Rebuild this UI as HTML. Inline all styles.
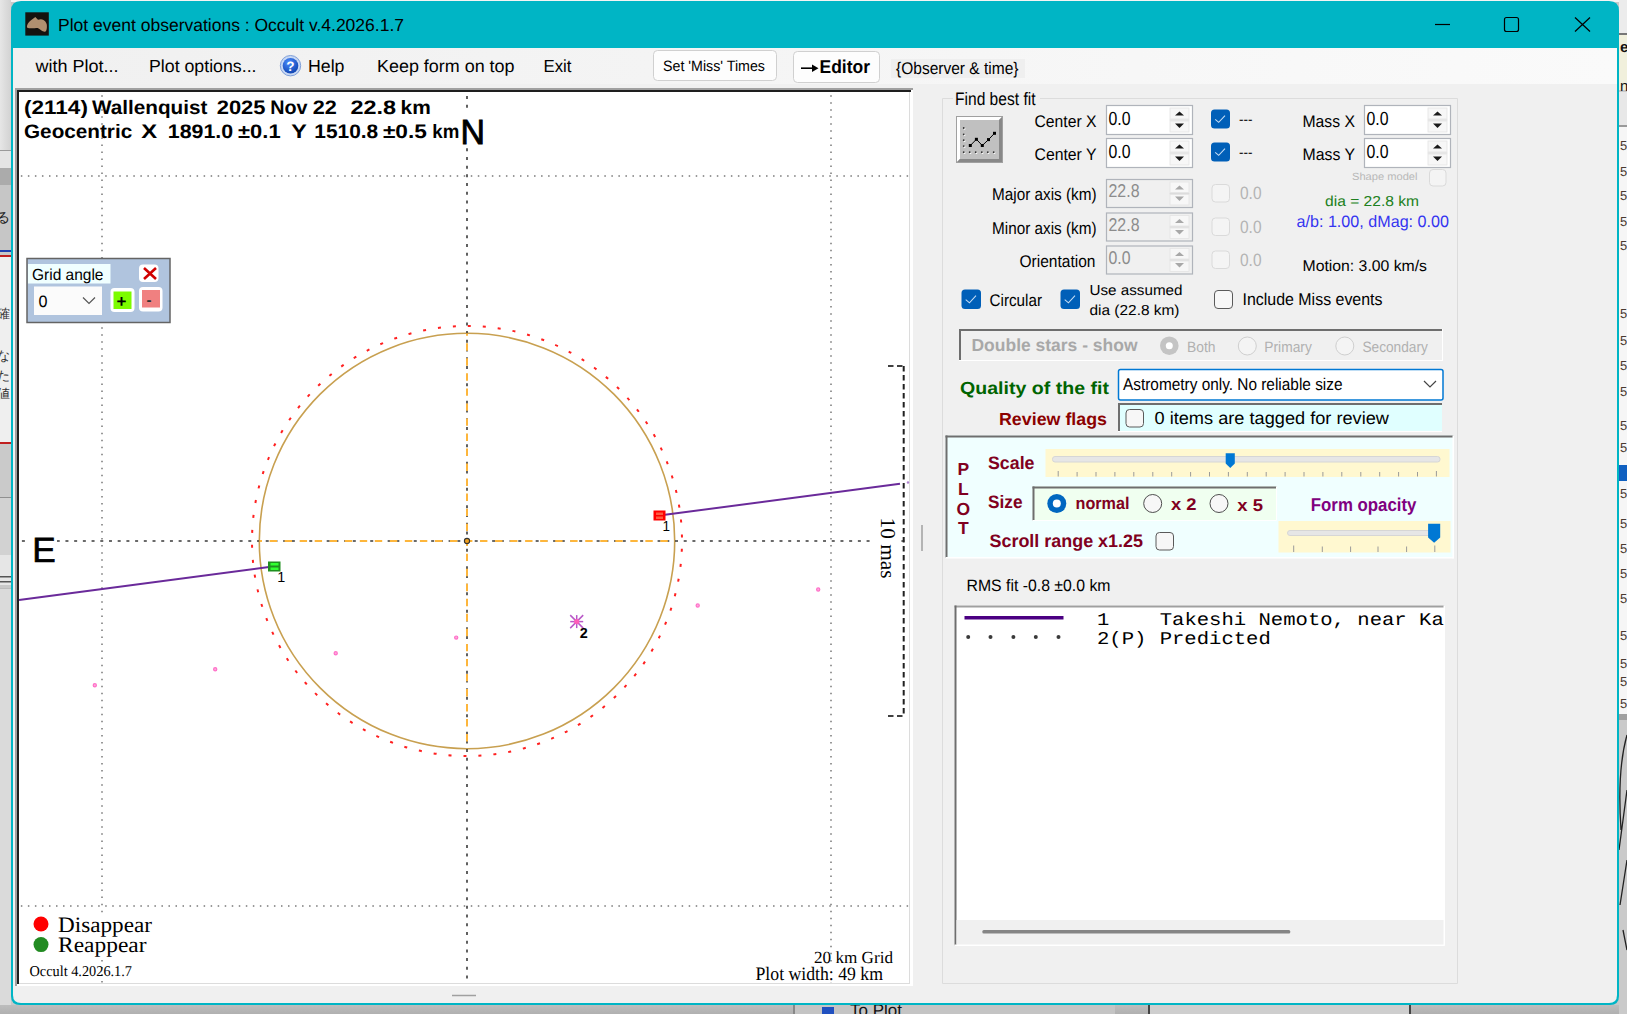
<!DOCTYPE html>
<html><head><meta charset="utf-8"><title>Plot event observations</title>
<style>html,body{margin:0;padding:0;background:#c8c8c8;overflow:hidden} svg{display:block}</style></head>
<body><svg width="1627" height="1014" viewBox="0 0 1627 1014" shape-rendering="auto" text-rendering="geometricPrecision">
<rect x="0" y="0" width="1627" height="1014" fill="#c8c8c8" />
<rect x="0" y="0" width="1627" height="2" fill="#f4f4f4" />
<defs><linearGradient id="lg" x1="0" x2="1"><stop offset="0" stop-color="#e6e6e6"/><stop offset="1" stop-color="#d2d2d2"/></linearGradient><linearGradient id="menug" x1="0" x2="1"><stop offset="0" stop-color="#f0f0f0"/><stop offset="1" stop-color="#fafafa"/></linearGradient><linearGradient id="bg2" x1="0" x2="0" y1="0" y2="1"><stop offset="0" stop-color="#bdbdbd"/><stop offset="1" stop-color="#b0b0b0"/></linearGradient></defs>
<rect x="0" y="0" width="11" height="150" fill="url(#lg)" />
<rect x="0" y="150" width="11" height="1" fill="#9a9a9a" />
<rect x="0" y="151" width="11" height="17" fill="#e4e4e4" />
<rect x="0" y="168" width="11" height="17" fill="#ababab" />
<rect x="0" y="185" width="11" height="65" fill="#c6c6c6" />
<text x="-4.0" y="222.0" font-size="14" font-family='"Liberation Sans", sans-serif' fill="#222" >る</text>
<rect x="0" y="250" width="11" height="2" fill="#2040b0" />
<rect x="0" y="255" width="11" height="2" fill="#c02020" />
<rect x="0" y="257" width="11" height="186" fill="#efefef" />
<text x="-3.0" y="318.0" font-size="13" font-family='"Liberation Sans", sans-serif' fill="#333" >確</text>
<text x="-3.0" y="360.0" font-size="13" font-family='"Liberation Sans", sans-serif' fill="#333" >な</text>
<text x="-3.0" y="380.0" font-size="13" font-family='"Liberation Sans", sans-serif' fill="#333" >た</text>
<text x="-3.0" y="398.0" font-size="13" font-family='"Liberation Sans", sans-serif' fill="#333" >値</text>
<rect x="0" y="442" width="11" height="2" fill="#c02020" />
<rect x="0" y="444" width="11" height="53" fill="#cacaca" />
<rect x="0" y="497" width="11" height="1" fill="#909090" />
<rect x="0" y="498" width="11" height="57" fill="#d2d2d2" />
<rect x="0" y="555" width="11" height="30" fill="#e6e6e6" />
<rect x="0" y="576" width="11" height="1.5" fill="#555" />
<rect x="0" y="581" width="11" height="1.5" fill="#555" />
<rect x="0" y="588" width="11" height="1" fill="#bbb" />
<rect x="0" y="589" width="11" height="416" fill="#dadada" />
<rect x="0" y="1005" width="1627" height="9" fill="url(#bg2)" />
<rect x="793" y="1005" width="2" height="9" fill="#888" />
<rect x="795" y="1005" width="320" height="9" fill="#c4c4c4" />
<text x="850.0" y="1016.0" font-size="17" font-family='"Liberation Sans", sans-serif' fill="#111" >To Plot</text>
<rect x="822" y="1007" width="12" height="7" fill="#2050c0" />
<rect x="1148" y="1005" width="2" height="9" fill="#444" />
<rect x="1372" y="1008" width="3" height="3" fill="#222" />
<rect x="1409" y="1005" width="2" height="9" fill="#444" />
<rect x="1150" y="1005" width="259" height="9" fill="#cecece" />
<rect x="1619" y="0" width="8" height="34" fill="#ececec" />
<rect x="1619" y="33" width="8" height="2" fill="#777" />
<rect x="1619" y="35" width="8" height="55" fill="#f1f0dc" />
<text x="1620.0" y="52.0" font-size="15" font-family='"Liberation Sans", sans-serif' fill="#111" font-weight="bold" >e</text>
<text x="1620.0" y="91.0" font-size="15" font-family='"Liberation Sans", sans-serif' fill="#111" >n</text>
<rect x="1619" y="92" width="8" height="33" fill="#e8e8e8" />
<rect x="1619" y="125" width="8" height="2" fill="#999" />
<rect x="1619" y="127" width="8" height="587" fill="#f6f6f6" />
<text x="1620.0" y="150.0" font-size="13" font-family='"Liberation Sans", sans-serif' fill="#4a3a30" >5</text>
<text x="1620.0" y="176.0" font-size="13" font-family='"Liberation Sans", sans-serif' fill="#4a3a30" >5</text>
<text x="1620.0" y="200.0" font-size="13" font-family='"Liberation Sans", sans-serif' fill="#4a3a30" >5</text>
<text x="1620.0" y="226.0" font-size="13" font-family='"Liberation Sans", sans-serif' fill="#4a3a30" >5</text>
<text x="1620.0" y="250.0" font-size="13" font-family='"Liberation Sans", sans-serif' fill="#4a3a30" >5</text>
<text x="1620.0" y="318.0" font-size="13" font-family='"Liberation Sans", sans-serif' fill="#4a3a30" >5</text>
<text x="1620.0" y="345.0" font-size="13" font-family='"Liberation Sans", sans-serif' fill="#4a3a30" >5</text>
<text x="1620.0" y="370.0" font-size="13" font-family='"Liberation Sans", sans-serif' fill="#4a3a30" >5</text>
<text x="1620.0" y="396.0" font-size="13" font-family='"Liberation Sans", sans-serif' fill="#4a3a30" >5</text>
<text x="1620.0" y="430.0" font-size="13" font-family='"Liberation Sans", sans-serif' fill="#4a3a30" >5</text>
<text x="1620.0" y="452.0" font-size="13" font-family='"Liberation Sans", sans-serif' fill="#4a3a30" >5</text>
<text x="1620.0" y="498.0" font-size="13" font-family='"Liberation Sans", sans-serif' fill="#4a3a30" >5</text>
<text x="1620.0" y="528.0" font-size="13" font-family='"Liberation Sans", sans-serif' fill="#4a3a30" >5</text>
<text x="1620.0" y="553.0" font-size="13" font-family='"Liberation Sans", sans-serif' fill="#4a3a30" >5</text>
<text x="1620.0" y="578.0" font-size="13" font-family='"Liberation Sans", sans-serif' fill="#4a3a30" >5</text>
<text x="1620.0" y="603.0" font-size="13" font-family='"Liberation Sans", sans-serif' fill="#4a3a30" >5</text>
<text x="1620.0" y="640.0" font-size="13" font-family='"Liberation Sans", sans-serif' fill="#4a3a30" >5</text>
<text x="1620.0" y="668.0" font-size="13" font-family='"Liberation Sans", sans-serif' fill="#4a3a30" >5</text>
<text x="1620.0" y="686.0" font-size="13" font-family='"Liberation Sans", sans-serif' fill="#4a3a30" >5</text>
<text x="1620.0" y="708.0" font-size="13" font-family='"Liberation Sans", sans-serif' fill="#4a3a30" >5</text>
<rect x="1619" y="465" width="8" height="16" fill="#1060c0" />
<rect x="1619" y="714" width="8" height="6" fill="#a0a0a0" />
<rect x="1619" y="720" width="8" height="294" fill="#cacaca" />
<path d="M1627,735 Q1617,770 1621,830 M1627,790 L1619,850 M1627,860 L1620,905 M1623,930 L1627,950" fill="none" stroke="#222" stroke-width="1.3"/>
<path d="M21,1 H1609 Q1619,1 1619,11 V996 Q1619,1005 1610,1005 H20 Q11,1005 11,996 V11 Q11,1 21,1 Z" fill="#00b5c5"/>
<path d="M13,48 H1617 V995 Q1617,1003 1609,1003 H21 Q13,1003 13,995 Z" fill="#f0f0f0"/>
<rect x="13" y="48" width="1604" height="36" fill="url(#menug)" />
<rect x="25.3" y="12.3" width="23.5" height="23.3" fill="#14120f" />
<path d="M26.9,26.5 C27.5,22 32,19.5 35.3,17 L38,19.7 C40,19 42,18.8 43.5,20 C46,21.5 47.2,24 46.9,27 C46.8,30 46,32 44.5,31.8 C41,31 39.5,28.5 37.7,28 C35,28 33,28.5 30.9,28.3 C28.5,28.2 26.7,28 26.9,26.5 Z" fill="#b09070"/>
<text x="58.0" y="31.0" font-size="17.5" font-family='"Liberation Sans", sans-serif' fill="#000" textLength="346.0" lengthAdjust="spacingAndGlyphs" >Plot event observations : Occult v.4.2026.1.7</text>
<line x1="1435" y1="24.5" x2="1450" y2="24.5" stroke="#000" stroke-width="1.2" />
<rect x="1504.5" y="17.5" width="14" height="14" fill="none" stroke="#000" stroke-width="1.2" rx="2" />
<line x1="1575" y1="17.5" x2="1590" y2="31.5" stroke="#000" stroke-width="1.2" />
<line x1="1590" y1="17.5" x2="1575" y2="31.5" stroke="#000" stroke-width="1.2" />
<text x="35.5" y="72.0" font-size="17.5" font-family='"Liberation Sans", sans-serif' fill="#000" textLength="83.0" lengthAdjust="spacingAndGlyphs" >with Plot...</text>
<text x="149.0" y="72.0" font-size="17.5" font-family='"Liberation Sans", sans-serif' fill="#000" textLength="107.5" lengthAdjust="spacingAndGlyphs" >Plot options...</text>
<defs><radialGradient id="hg" cx="0.4" cy="0.3" r="0.8"><stop offset="0" stop-color="#4a8cff"/><stop offset="1" stop-color="#0a3ca8"/></radialGradient></defs>
<circle cx="290.5" cy="65.7" r="10.2" fill="#c8d8f4" stroke="#7f9fd8" stroke-width="1"/>
<circle cx="290.5" cy="65.7" r="7.8" fill="url(#hg)"/>
<text x="286.2" y="70.8" font-size="13.5" font-family='"Liberation Sans", sans-serif' fill="#fff" font-weight="bold" >?</text>
<text x="308.0" y="72.0" font-size="17.5" font-family='"Liberation Sans", sans-serif' fill="#000" textLength="36.5" lengthAdjust="spacingAndGlyphs" >Help</text>
<text x="377.0" y="72.0" font-size="17.5" font-family='"Liberation Sans", sans-serif' fill="#000" textLength="137.5" lengthAdjust="spacingAndGlyphs" >Keep form on top</text>
<text x="543.5" y="72.0" font-size="17.5" font-family='"Liberation Sans", sans-serif' fill="#000" textLength="28.0" lengthAdjust="spacingAndGlyphs" >Exit</text>
<rect x="653.5" y="50.5" width="123" height="30" fill="#fdfdfd" stroke="#d0d0d0" stroke-width="1" rx="4" />
<text x="663.0" y="70.5" font-size="15" font-family='"Liberation Sans", sans-serif' fill="#000" textLength="102.0" lengthAdjust="spacingAndGlyphs" >Set 'Miss' Times</text>
<rect x="793.5" y="51.5" width="86" height="31" fill="#fdfdfd" stroke="#d0d0d0" stroke-width="1" rx="4" />
<line x1="801" y1="68.2" x2="815" y2="68.2" stroke="#000" stroke-width="1.6" />
<path d="M812,64.5 L818.5,68.2 L812,71.9 Z" fill="#000"/>
<text x="819.5" y="73.4" font-size="18.5" font-family='"Liberation Sans", sans-serif' fill="#000" font-weight="bold" textLength="50.5" lengthAdjust="spacingAndGlyphs" >Editor</text>
<rect x="891" y="59" width="134" height="19" fill="#efefef" />
<text x="896.0" y="74.0" font-size="17" font-family='"Liberation Sans", sans-serif' fill="#000" textLength="122.5" lengthAdjust="spacingAndGlyphs" >{Observer &amp; time}</text>
<rect x="15" y="88" width="898" height="898" fill="#ffffff" />
<rect x="15" y="88" width="898" height="2" fill="#a0a0a0" />
<rect x="15" y="88" width="2" height="898" fill="#a0a0a0" />
<rect x="17" y="90" width="894" height="2" fill="#1e1e1e" />
<rect x="17" y="90" width="2" height="894" fill="#1e1e1e" />
<rect x="909" y="92" width="1" height="892" fill="#dcdcdc" />
<rect x="19" y="983" width="891" height="1" fill="#dcdcdc" />
<g id="plot">
<line x1="102" y1="93" x2="102" y2="983" stroke="#787878" stroke-width="1.5" stroke-dasharray="1.5 5.53" stroke-dashoffset="-2.2"/>
<line x1="831" y1="93" x2="831" y2="983" stroke="#787878" stroke-width="1.5" stroke-dasharray="1.5 5.53" stroke-dashoffset="-2.2"/>
<line x1="19" y1="176" x2="909" y2="176" stroke="#787878" stroke-width="1.5" stroke-dasharray="1.5 5.53" stroke-dashoffset="-1.85"/>
<line x1="19" y1="906" x2="909" y2="906" stroke="#787878" stroke-width="1.5" stroke-dasharray="1.5 5.53" stroke-dashoffset="-1.85"/>
<circle cx="467" cy="541" r="207.7" fill="none" stroke="#c8a050" stroke-width="1.6"/>
<circle cx="467" cy="541" r="215" fill="none" stroke="#ff2020" stroke-width="2" stroke-dasharray="3 12.010" stroke-dashoffset="-7.9"/>
<line x1="19" y1="541" x2="909" y2="541" stroke="#3a3a3a" stroke-width="1.6" stroke-dasharray="3 5.708" stroke-dashoffset="-2.9"/>
<line x1="467" y1="93" x2="467" y2="983" stroke="#3a3a3a" stroke-width="1.6" stroke-dasharray="3 5.708" stroke-dashoffset="-3"/>
<line x1="259.3" y1="541" x2="674.7" y2="541" stroke="#fdb63c" stroke-width="2" stroke-dasharray="7.4 7.63" stroke-dashoffset="-10.3"/>
<line x1="467" y1="333.3" x2="467" y2="748.7" stroke="#fdb63c" stroke-width="2" stroke-dasharray="7.4 7.63" stroke-dashoffset="-10"/>
<rect x="458" y="111" width="29" height="36" fill="#fff" />
<rect x="26" y="531" width="31" height="34" fill="#fff" />
<rect x="871" y="512" width="29" height="72" fill="#fff" />
<circle cx="467" cy="541" r="2.6" fill="#f0a020" stroke="#333" stroke-width="1.1"/>
<line x1="19" y1="600.1" x2="269" y2="567.1" stroke="#6a2a9a" stroke-width="2" />
<line x1="665" y1="514.8" x2="900" y2="483.7" stroke="#6a2a9a" stroke-width="2" />
<circle cx="908" cy="482.5" r="1.2" fill="#b080d0"/>
<rect x="268" y="561.5" width="12.5" height="10" fill="#1f8f1f" />
<rect x="270.5" y="563" width="8" height="2.5" fill="#30ff30" />
<rect x="270.5" y="567.5" width="8" height="2.5" fill="#30ff30" />
<rect x="653.5" y="510.5" width="12" height="10" fill="#ff0000" />
<rect x="656" y="512.5" width="7" height="2.5" fill="#ff5a40" />
<rect x="656" y="516.5" width="7" height="2.5" fill="#ff5a40" />
<text x="277.3" y="581.5" font-size="14.5" font-family='"Liberation Sans", sans-serif' fill="#000" textLength="8.0" lengthAdjust="spacingAndGlyphs" >1</text>
<text x="662.5" y="531.0" font-size="14.5" font-family='"Liberation Sans", sans-serif' fill="#000" textLength="7.5" lengthAdjust="spacingAndGlyphs" >1</text>
<circle cx="94.8" cy="685.3" r="1.6" fill="#ffa8dc" stroke="#ff70c8" stroke-width="1.2"/>
<circle cx="215.2" cy="669.3" r="1.6" fill="#ffa8dc" stroke="#ff70c8" stroke-width="1.2"/>
<circle cx="335.7" cy="653.3" r="1.6" fill="#ffa8dc" stroke="#ff70c8" stroke-width="1.2"/>
<circle cx="456.2" cy="637.6" r="1.6" fill="#ffa8dc" stroke="#ff70c8" stroke-width="1.2"/>
<circle cx="697.7" cy="605.5" r="1.6" fill="#ffa8dc" stroke="#ff70c8" stroke-width="1.2"/>
<circle cx="818.2" cy="589.5" r="1.6" fill="#ffa8dc" stroke="#ff70c8" stroke-width="1.2"/>
<line x1="570.2" y1="621.6" x2="583.2" y2="621.6" stroke="#b858c8" stroke-width="1.5" />
<line x1="576.7" y1="615.1" x2="576.7" y2="628.1" stroke="#b858c8" stroke-width="1.5" />
<line x1="570.2" y1="615.1" x2="583.2" y2="628.1" stroke="#b858c8" stroke-width="1.5" />
<line x1="570.2" y1="628.1" x2="583.2" y2="615.1" stroke="#b858c8" stroke-width="1.5" />
<circle cx="576.7" cy="621.6" r="2.6" fill="#ff5cb8"/>
<text x="579.8" y="637.7" font-size="14.5" font-family='"Liberation Sans", sans-serif' fill="#000" font-weight="bold" textLength="8.0" lengthAdjust="spacingAndGlyphs" >2</text>
<line x1="903.7" y1="366" x2="903.7" y2="716" stroke="#202020" stroke-width="2" stroke-dasharray="5.5 3.5"/>
<line x1="888" y1="366" x2="903.7" y2="366" stroke="#404040" stroke-width="2" stroke-dasharray="5.5 3.5"/>
<line x1="888" y1="716" x2="903.7" y2="716" stroke="#404040" stroke-width="2" stroke-dasharray="5.5 3.5"/>
<text x="880.5" y="517.5" font-size="21" font-family='"Liberation Serif", serif' fill="#000" textLength="61.0" lengthAdjust="spacingAndGlyphs" transform="rotate(90 880.5 517.5)">10 mas</text>
<text x="24.0" y="114.0" font-size="19.5" font-family='"Liberation Sans", sans-serif' fill="#000" font-weight="bold" textLength="63.9" lengthAdjust="spacingAndGlyphs" >(2114)</text>
<text x="91.9" y="114.0" font-size="19.5" font-family='"Liberation Sans", sans-serif' fill="#000" font-weight="bold" textLength="115.5" lengthAdjust="spacingAndGlyphs" >Wallenquist</text>
<text x="216.7" y="114.0" font-size="19.5" font-family='"Liberation Sans", sans-serif' fill="#000" font-weight="bold" textLength="48.8" lengthAdjust="spacingAndGlyphs" >2025</text>
<text x="270.2" y="114.0" font-size="19.5" font-family='"Liberation Sans", sans-serif' fill="#000" font-weight="bold" textLength="37.3" lengthAdjust="spacingAndGlyphs" >Nov</text>
<text x="312.8" y="114.0" font-size="19.5" font-family='"Liberation Sans", sans-serif' fill="#000" font-weight="bold" textLength="24.1" lengthAdjust="spacingAndGlyphs" >22</text>
<text x="350.4" y="114.0" font-size="19.5" font-family='"Liberation Sans", sans-serif' fill="#000" font-weight="bold" textLength="45.5" lengthAdjust="spacingAndGlyphs" >22.8</text>
<text x="400.6" y="114.0" font-size="19.5" font-family='"Liberation Sans", sans-serif' fill="#000" font-weight="bold" textLength="30.2" lengthAdjust="spacingAndGlyphs" >km</text>
<text x="24.0" y="138.3" font-size="19.5" font-family='"Liberation Sans", sans-serif' fill="#000" font-weight="bold" textLength="108.2" lengthAdjust="spacingAndGlyphs" >Geocentric</text>
<text x="141.3" y="138.3" font-size="19.5" font-family='"Liberation Sans", sans-serif' fill="#000" font-weight="bold" textLength="15.9" lengthAdjust="spacingAndGlyphs" >X</text>
<text x="167.8" y="138.3" font-size="19.5" font-family='"Liberation Sans", sans-serif' fill="#000" font-weight="bold" textLength="65.4" lengthAdjust="spacingAndGlyphs" >1891.0</text>
<text x="238.1" y="138.3" font-size="19.5" font-family='"Liberation Sans", sans-serif' fill="#000" font-weight="bold" textLength="42.5" lengthAdjust="spacingAndGlyphs" >±0.1</text>
<text x="291.2" y="138.3" font-size="19.5" font-family='"Liberation Sans", sans-serif' fill="#000" font-weight="bold" textLength="15.6" lengthAdjust="spacingAndGlyphs" >Y</text>
<text x="314.3" y="138.3" font-size="19.5" font-family='"Liberation Sans", sans-serif' fill="#000" font-weight="bold" textLength="63.9" lengthAdjust="spacingAndGlyphs" >1510.8</text>
<text x="382.9" y="138.3" font-size="19.5" font-family='"Liberation Sans", sans-serif' fill="#000" font-weight="bold" textLength="44.0" lengthAdjust="spacingAndGlyphs" >±0.5</text>
<text x="432.3" y="138.3" font-size="19.5" font-family='"Liberation Sans", sans-serif' fill="#000" font-weight="bold" textLength="27.0" lengthAdjust="spacingAndGlyphs" >km</text>
<text x="460.5" y="144.0" font-size="35" font-family='"Liberation Sans", sans-serif' fill="#000" textLength="24.5" lengthAdjust="spacingAndGlyphs" stroke="#000" stroke-width="0.9">N</text>
<text x="32.3" y="561.5" font-size="35" font-family='"Liberation Sans", sans-serif' fill="#000" textLength="23.5" lengthAdjust="spacingAndGlyphs" stroke="#000" stroke-width="0.7">E</text>
<rect x="29" y="913.5" width="127" height="44" fill="#fff" />
<rect x="752" y="965.5" width="134" height="17" fill="#fff" />
<circle cx="41" cy="924" r="7.5" fill="#ff0000"/>
<circle cx="41" cy="944.6" r="7.5" fill="#228b22"/>
<text x="58.0" y="931.7" font-size="22" font-family='"Liberation Serif", serif' fill="#000" textLength="94.0" lengthAdjust="spacingAndGlyphs" >Disappear</text>
<text x="58.0" y="952.3" font-size="22" font-family='"Liberation Serif", serif' fill="#000" textLength="88.5" lengthAdjust="spacingAndGlyphs" >Reappear</text>
<text x="29.5" y="976.4" font-size="15" font-family='"Liberation Serif", serif' fill="#000" textLength="102.5" lengthAdjust="spacingAndGlyphs" >Occult 4.2026.1.7</text>
<text x="814.0" y="963.0" font-size="17" font-family='"Liberation Serif", serif' fill="#000" textLength="79.0" lengthAdjust="spacingAndGlyphs" >20 km Grid</text>
<text x="755.5" y="979.5" font-size="19" font-family='"Liberation Serif", serif' fill="#000" textLength="127.5" lengthAdjust="spacingAndGlyphs" >Plot width: 49 km</text>
<rect x="27" y="258.5" width="143" height="64" fill="#b0c4de" stroke="#646464" stroke-width="1.5" />
<rect x="28" y="264" width="82.5" height="19.5" fill="#f0ffff" />
<text x="32.0" y="280.0" font-size="16" font-family='"Liberation Sans", sans-serif' fill="#000" textLength="71.5" lengthAdjust="spacingAndGlyphs" >Grid angle</text>
<rect x="34" y="286.5" width="68" height="28.5" fill="#fbfbfb" />
<text x="38.5" y="307.0" font-size="16.5" font-family='"Liberation Sans", sans-serif' fill="#000" textLength="9.0" lengthAdjust="spacingAndGlyphs" >0</text>
<path d="M83,297.5 L89,303.5 L95,297.5" fill="none" stroke="#555" stroke-width="1.2"/>
<rect x="110.5" y="288" width="24" height="24" fill="#fff" rx="4" />
<rect x="113.5" y="291.5" width="18" height="17.5" fill="#7cfc00" />
<text x="116.5" y="306.5" font-size="17" font-family='"Liberation Sans", sans-serif' fill="#000" font-weight="bold" >+</text>
<rect x="139" y="287" width="23.5" height="24.5" fill="#fff" rx="4" />
<rect x="142" y="290" width="18" height="17.5" fill="#f08080" />
<text x="146.5" y="305.0" font-size="15" font-family='"Liberation Sans", sans-serif' fill="#333" font-weight="bold" >-</text>
<rect x="139" y="264.5" width="19.5" height="17.5" fill="#fff" rx="4" />
<path d="M144,268 L156,279 M156,268 L144,279" stroke="#d00000" stroke-width="2.6"/>
</g>
<line x1="922" y1="525" x2="922" y2="551" stroke="#a0a0a0" stroke-width="1.5" />
<line x1="452" y1="995.5" x2="476" y2="995.5" stroke="#a0a0a0" stroke-width="1.5" />
<path d="M953,98.5 H942.5 V983.5 H1457.5 V98.5 H1040" fill="none" stroke="#dcdcdc" stroke-width="1"/>
<text x="955.0" y="105.0" font-size="18" font-family='"Liberation Sans", sans-serif' fill="#000" textLength="80.5" lengthAdjust="spacingAndGlyphs" >Find best fit</text>
<rect x="956" y="116" width="47" height="47" fill="#a0a0a0" />
<path d="M957,117 H1002 L999,120 H960 V159 L957,162 Z" fill="#ffffff"/>
<path d="M1002,117 V162 H957 L960,159 H999 V120 Z" fill="#888888"/>
<rect x="960" y="120" width="39" height="39" fill="#c0c0c0" />
<circle cx="964.6" cy="128.8" r="0.9" fill="#fff"/><circle cx="963.7" cy="128" r="0.9" fill="#333"/>
<circle cx="964.6" cy="135.10000000000002" r="0.9" fill="#fff"/><circle cx="963.7" cy="134.3" r="0.9" fill="#333"/>
<circle cx="964.6" cy="141.0" r="0.9" fill="#fff"/><circle cx="963.7" cy="140.2" r="0.9" fill="#333"/>
<circle cx="964.6" cy="146.9" r="0.9" fill="#fff"/><circle cx="963.7" cy="146.1" r="0.9" fill="#333"/>
<circle cx="964.6" cy="153.0" r="0.9" fill="#fff"/><circle cx="963.7" cy="152.2" r="0.9" fill="#333"/>
<circle cx="970.5" cy="153" r="0.9" fill="#fff"/><circle cx="969.7" cy="152.2" r="0.9" fill="#333"/>
<circle cx="976.5" cy="153" r="0.9" fill="#fff"/><circle cx="975.7" cy="152.2" r="0.9" fill="#333"/>
<circle cx="982.5999999999999" cy="153" r="0.9" fill="#fff"/><circle cx="981.8" cy="152.2" r="0.9" fill="#333"/>
<circle cx="988.5999999999999" cy="153" r="0.9" fill="#fff"/><circle cx="987.8" cy="152.2" r="0.9" fill="#333"/>
<circle cx="994.5" cy="153" r="0.9" fill="#fff"/><circle cx="993.7" cy="152.2" r="0.9" fill="#333"/>
<polyline points="970.3,145.5 976.4,139.3 982.3,145.5 988.5,139.6 994.5,133.3" fill="none" stroke="#000" stroke-width="1"/>
<rect x="968.8" y="144.0" width="3" height="3" fill="#000" />
<rect x="974.9" y="137.8" width="3" height="3" fill="#000" />
<rect x="980.8" y="144.0" width="3" height="3" fill="#000" />
<rect x="987.0" y="138.1" width="3" height="3" fill="#000" />
<rect x="993.0" y="131.8" width="3" height="3" fill="#000" />
<rect x="1106.5" y="105.5" width="86" height="29" fill="#ffffff" stroke="#b0b4bb" stroke-width="1.2" />
<rect x="1170.0" y="108" width="19" height="11.0" fill="#f7f7f7" stroke="#e4e4e4" stroke-width="0.8" />
<rect x="1170.0" y="121.0" width="19" height="11.0" fill="#f7f7f7" stroke="#e4e4e4" stroke-width="0.8" />
<line x1="1169.5" y1="120.0" x2="1189.5" y2="120.0" stroke="#dcdcdc" stroke-width="1.2" />
<path d="M1175.0,115.5 L1179.5,111.5 L1184.0,115.5 Z" fill="#1a1a1a"/>
<path d="M1175.0,123.5 L1179.5,128 L1184.0,123.5 Z" fill="#1a1a1a"/>
<text x="1108.5" y="124.6" font-size="19" font-family='"Liberation Sans", sans-serif' fill="#000" textLength="22.0" lengthAdjust="spacingAndGlyphs" >0.0</text>
<rect x="1106.5" y="138.5" width="86" height="29" fill="#ffffff" stroke="#b0b4bb" stroke-width="1.2" />
<rect x="1170.0" y="141" width="19" height="11.0" fill="#f7f7f7" stroke="#e4e4e4" stroke-width="0.8" />
<rect x="1170.0" y="154.0" width="19" height="11.0" fill="#f7f7f7" stroke="#e4e4e4" stroke-width="0.8" />
<line x1="1169.5" y1="153.0" x2="1189.5" y2="153.0" stroke="#dcdcdc" stroke-width="1.2" />
<path d="M1175.0,148.5 L1179.5,144.5 L1184.0,148.5 Z" fill="#1a1a1a"/>
<path d="M1175.0,156.5 L1179.5,161 L1184.0,156.5 Z" fill="#1a1a1a"/>
<text x="1108.5" y="157.6" font-size="19" font-family='"Liberation Sans", sans-serif' fill="#000" textLength="22.0" lengthAdjust="spacingAndGlyphs" >0.0</text>
<text x="1034.5" y="126.6" font-size="16.8" font-family='"Liberation Sans", sans-serif' fill="#000" textLength="62.0" lengthAdjust="spacingAndGlyphs" >Center X</text>
<text x="1034.5" y="159.7" font-size="16.8" font-family='"Liberation Sans", sans-serif' fill="#000" textLength="62.0" lengthAdjust="spacingAndGlyphs" >Center Y</text>
<rect x="1211" y="109.5" width="19" height="19" fill="#005fb8" rx="3.5" />
<path d="M1215.2,119.3 L1218.7,122.3 L1225,115.7" fill="none" stroke="#c4dcf4" stroke-width="1.1"/>
<rect x="1211" y="142.5" width="19" height="19" fill="#005fb8" rx="3.5" />
<path d="M1215.2,152.3 L1218.7,155.3 L1225,148.7" fill="none" stroke="#c4dcf4" stroke-width="1.1"/>
<text x="1239.0" y="124.0" font-size="14" font-family='"Liberation Sans", sans-serif' fill="#000" textLength="13.5" lengthAdjust="spacingAndGlyphs" >---</text>
<text x="1239.0" y="157.0" font-size="14" font-family='"Liberation Sans", sans-serif' fill="#000" textLength="13.5" lengthAdjust="spacingAndGlyphs" >---</text>
<text x="1302.5" y="127.1" font-size="16.8" font-family='"Liberation Sans", sans-serif' fill="#000" textLength="52.5" lengthAdjust="spacingAndGlyphs" >Mass X</text>
<text x="1302.5" y="160.3" font-size="16.8" font-family='"Liberation Sans", sans-serif' fill="#000" textLength="52.5" lengthAdjust="spacingAndGlyphs" >Mass Y</text>
<rect x="1364.5" y="105.5" width="86" height="29" fill="#ffffff" stroke="#b0b4bb" stroke-width="1.2" />
<rect x="1428.0" y="108" width="19" height="11.0" fill="#f7f7f7" stroke="#e4e4e4" stroke-width="0.8" />
<rect x="1428.0" y="121.0" width="19" height="11.0" fill="#f7f7f7" stroke="#e4e4e4" stroke-width="0.8" />
<line x1="1427.5" y1="120.0" x2="1447.5" y2="120.0" stroke="#dcdcdc" stroke-width="1.2" />
<path d="M1433.0,115.5 L1437.5,111.5 L1442.0,115.5 Z" fill="#1a1a1a"/>
<path d="M1433.0,123.5 L1437.5,128 L1442.0,123.5 Z" fill="#1a1a1a"/>
<text x="1366.5" y="124.6" font-size="19" font-family='"Liberation Sans", sans-serif' fill="#000" textLength="22.0" lengthAdjust="spacingAndGlyphs" >0.0</text>
<rect x="1364.5" y="138.5" width="86" height="29" fill="#ffffff" stroke="#b0b4bb" stroke-width="1.2" />
<rect x="1428.0" y="141" width="19" height="11.0" fill="#f7f7f7" stroke="#e4e4e4" stroke-width="0.8" />
<rect x="1428.0" y="154.0" width="19" height="11.0" fill="#f7f7f7" stroke="#e4e4e4" stroke-width="0.8" />
<line x1="1427.5" y1="153.0" x2="1447.5" y2="153.0" stroke="#dcdcdc" stroke-width="1.2" />
<path d="M1433.0,148.5 L1437.5,144.5 L1442.0,148.5 Z" fill="#1a1a1a"/>
<path d="M1433.0,156.5 L1437.5,161 L1442.0,156.5 Z" fill="#1a1a1a"/>
<text x="1366.5" y="157.6" font-size="19" font-family='"Liberation Sans", sans-serif' fill="#000" textLength="22.0" lengthAdjust="spacingAndGlyphs" >0.0</text>
<text x="1352.0" y="179.6" font-size="10.5" font-family='"Liberation Sans", sans-serif' fill="#b8b8b8" textLength="65.5" lengthAdjust="spacingAndGlyphs" >Shape model</text>
<rect x="1429.5" y="169.5" width="16.5" height="16.5" fill="#f4f4f4" stroke="#dadada" stroke-width="1" rx="3.5" />
<rect x="1106.5" y="179.5" width="86" height="28" fill="#f0f0f0" stroke="#b0b4bb" stroke-width="1.2" />
<rect x="1170.0" y="182" width="19" height="10.5" fill="#f7f7f7" stroke="#e4e4e4" stroke-width="0.8" />
<rect x="1170.0" y="194.5" width="19" height="10.5" fill="#f7f7f7" stroke="#e4e4e4" stroke-width="0.8" />
<line x1="1169.5" y1="193.5" x2="1189.5" y2="193.5" stroke="#dcdcdc" stroke-width="1.2" />
<path d="M1175.0,189.5 L1179.5,185.5 L1184.0,189.5 Z" fill="#a8a8a8"/>
<path d="M1175.0,196.5 L1179.5,201 L1184.0,196.5 Z" fill="#a8a8a8"/>
<text x="1108.5" y="197.3" font-size="18.5" font-family='"Liberation Sans", sans-serif' fill="#8c8c8c" textLength="31.0" lengthAdjust="spacingAndGlyphs" >22.8</text>
<text x="992.0" y="200.0" font-size="17" font-family='"Liberation Sans", sans-serif' fill="#000" textLength="104.5" lengthAdjust="spacingAndGlyphs" >Major axis (km)</text>
<rect x="1212.0" y="184.5" width="17.5" height="17.5" fill="#f4f4f4" stroke="#dadada" stroke-width="1" rx="3.5" />
<text x="1240.0" y="199.3" font-size="18" font-family='"Liberation Sans", sans-serif' fill="#b4b4b4" textLength="21.5" lengthAdjust="spacingAndGlyphs" >0.0</text>
<rect x="1106.5" y="213.0" width="86" height="28" fill="#f0f0f0" stroke="#b0b4bb" stroke-width="1.2" />
<rect x="1170.0" y="215.5" width="19" height="10.5" fill="#f7f7f7" stroke="#e4e4e4" stroke-width="0.8" />
<rect x="1170.0" y="228.0" width="19" height="10.5" fill="#f7f7f7" stroke="#e4e4e4" stroke-width="0.8" />
<line x1="1169.5" y1="227.0" x2="1189.5" y2="227.0" stroke="#dcdcdc" stroke-width="1.2" />
<path d="M1175.0,223.0 L1179.5,219.0 L1184.0,223.0 Z" fill="#a8a8a8"/>
<path d="M1175.0,230.0 L1179.5,234.5 L1184.0,230.0 Z" fill="#a8a8a8"/>
<text x="1108.5" y="230.8" font-size="18.5" font-family='"Liberation Sans", sans-serif' fill="#8c8c8c" textLength="31.0" lengthAdjust="spacingAndGlyphs" >22.8</text>
<text x="992.0" y="233.5" font-size="17" font-family='"Liberation Sans", sans-serif' fill="#000" textLength="104.5" lengthAdjust="spacingAndGlyphs" >Minor axis (km)</text>
<rect x="1212.0" y="218.0" width="17.5" height="17.5" fill="#f4f4f4" stroke="#dadada" stroke-width="1" rx="3.5" />
<text x="1240.0" y="232.8" font-size="18" font-family='"Liberation Sans", sans-serif' fill="#b4b4b4" textLength="21.5" lengthAdjust="spacingAndGlyphs" >0.0</text>
<rect x="1106.5" y="246.0" width="86" height="28" fill="#f0f0f0" stroke="#b0b4bb" stroke-width="1.2" />
<rect x="1170.0" y="248.5" width="19" height="10.5" fill="#f7f7f7" stroke="#e4e4e4" stroke-width="0.8" />
<rect x="1170.0" y="261.0" width="19" height="10.5" fill="#f7f7f7" stroke="#e4e4e4" stroke-width="0.8" />
<line x1="1169.5" y1="260.0" x2="1189.5" y2="260.0" stroke="#dcdcdc" stroke-width="1.2" />
<path d="M1175.0,256.0 L1179.5,252.0 L1184.0,256.0 Z" fill="#a8a8a8"/>
<path d="M1175.0,263.0 L1179.5,267.5 L1184.0,263.0 Z" fill="#a8a8a8"/>
<text x="1108.5" y="263.8" font-size="18.5" font-family='"Liberation Sans", sans-serif' fill="#8c8c8c" textLength="22.0" lengthAdjust="spacingAndGlyphs" >0.0</text>
<text x="1019.5" y="266.5" font-size="17" font-family='"Liberation Sans", sans-serif' fill="#000" textLength="76.0" lengthAdjust="spacingAndGlyphs" >Orientation</text>
<rect x="1212.0" y="251.0" width="17.5" height="17.5" fill="#f4f4f4" stroke="#dadada" stroke-width="1" rx="3.5" />
<text x="1240.0" y="265.8" font-size="18" font-family='"Liberation Sans", sans-serif' fill="#b4b4b4" textLength="21.5" lengthAdjust="spacingAndGlyphs" >0.0</text>
<text x="1325.0" y="205.5" font-size="14.5" font-family='"Liberation Sans", sans-serif' fill="#208020" textLength="94.0" lengthAdjust="spacingAndGlyphs" >dia = 22.8 km</text>
<text x="1296.5" y="226.5" font-size="16.5" font-family='"Liberation Sans", sans-serif' fill="#3434f0" textLength="152.5" lengthAdjust="spacingAndGlyphs" >a/b: 1.00, dMag: 0.00</text>
<text x="1302.5" y="271.3" font-size="15.5" font-family='"Liberation Sans", sans-serif' fill="#000" textLength="124.5" lengthAdjust="spacingAndGlyphs" >Motion: 3.00 km/s</text>
<rect x="961.5" y="289.5" width="19.5" height="19.5" fill="#005fb8" rx="3.5" />
<path d="M965.7,299.55 L969.45,302.8 L976.0,295.7" fill="none" stroke="#c4dcf4" stroke-width="1.1"/>
<text x="989.5" y="305.8" font-size="17" font-family='"Liberation Sans", sans-serif' fill="#000" textLength="52.5" lengthAdjust="spacingAndGlyphs" >Circular</text>
<rect x="1060.5" y="289.5" width="19.5" height="19.5" fill="#005fb8" rx="3.5" />
<path d="M1064.7,299.55 L1068.45,302.8 L1075.0,295.7" fill="none" stroke="#c4dcf4" stroke-width="1.1"/>
<text x="1089.5" y="294.7" font-size="14.5" font-family='"Liberation Sans", sans-serif' fill="#000" textLength="93.0" lengthAdjust="spacingAndGlyphs" >Use assumed</text>
<text x="1089.5" y="314.7" font-size="14.5" font-family='"Liberation Sans", sans-serif' fill="#000" textLength="90.0" lengthAdjust="spacingAndGlyphs" >dia (22.8 km)</text>
<rect x="1214.5" y="290.5" width="18" height="18" fill="#f7f7f7" stroke="#5a5a5a" stroke-width="1" rx="3.5" />
<text x="1242.5" y="305.4" font-size="17" font-family='"Liberation Sans", sans-serif' fill="#000" textLength="140.0" lengthAdjust="spacingAndGlyphs" >Include Miss events</text>
<rect x="959" y="329" width="484" height="31.5" fill="#f0f0f0" />
<rect x="959" y="329" width="484" height="2" fill="#6e6e6e" />
<rect x="959" y="329" width="2" height="31.5" fill="#6e6e6e" />
<rect x="959" y="360" width="484" height="1" fill="#ffffff" />
<rect x="1442" y="329" width="1" height="32" fill="#ffffff" />
<text x="971.5" y="350.7" font-size="17.5" font-family='"Liberation Sans", sans-serif' fill="#a8a8a8" font-weight="bold" textLength="166.0" lengthAdjust="spacingAndGlyphs" >Double stars - show</text>
<circle cx="1169.3" cy="345.7" r="9.3" fill="#c4c4c4"/><circle cx="1169.3" cy="345.7" r="3.5" fill="#fff"/>
<text x="1187.0" y="351.8" font-size="15" font-family='"Liberation Sans", sans-serif' fill="#b0b0b0" textLength="28.5" lengthAdjust="spacingAndGlyphs" >Both</text>
<circle cx="1247.3" cy="346" r="9" fill="#f4f4f4" stroke="#cfcfcf" stroke-width="1"/>
<text x="1264.3" y="351.8" font-size="15" font-family='"Liberation Sans", sans-serif' fill="#b0b0b0" textLength="47.5" lengthAdjust="spacingAndGlyphs" >Primary</text>
<circle cx="1344.8" cy="346" r="9" fill="#f4f4f4" stroke="#cfcfcf" stroke-width="1"/>
<text x="1362.4" y="351.8" font-size="15" font-family='"Liberation Sans", sans-serif' fill="#b0b0b0" textLength="65.5" lengthAdjust="spacingAndGlyphs" >Secondary</text>
<text x="960.0" y="394.0" font-size="17.5" font-family='"Liberation Sans", sans-serif' fill="#006400" font-weight="bold" textLength="149.0" lengthAdjust="spacingAndGlyphs" >Quality of the fit</text>
<rect x="1118.5" y="369.5" width="324.5" height="30.5" fill="#ffffff" stroke="#0078d4" stroke-width="1.5" rx="2" />
<text x="1123.0" y="389.8" font-size="17" font-family='"Liberation Sans", sans-serif' fill="#000" textLength="219.5" lengthAdjust="spacingAndGlyphs" >Astrometry only. No reliable size</text>
<path d="M1424,381 L1430,387 L1436,381" fill="none" stroke="#444" stroke-width="1.2"/>
<text x="999.0" y="424.5" font-size="17.5" font-family='"Liberation Sans", sans-serif' fill="#8b0000" font-weight="bold" textLength="108.0" lengthAdjust="spacingAndGlyphs" >Review flags</text>
<rect x="1118" y="403" width="324" height="29" fill="#e0ffff" />
<rect x="1118" y="403" width="324" height="2" fill="#6e6e6e" />
<rect x="1118" y="403" width="2" height="29" fill="#6e6e6e" />
<rect x="1118" y="431" width="324" height="1" fill="#ffffff" />
<rect x="1126.0" y="409.5" width="17.5" height="17.5" fill="#f7f7f7" stroke="#5a5a5a" stroke-width="1" rx="3.5" />
<text x="1154.5" y="424.3" font-size="17.5" font-family='"Liberation Sans", sans-serif' fill="#000" textLength="234.5" lengthAdjust="spacingAndGlyphs" >0 items are tagged for review</text>
<rect x="945.5" y="435.5" width="508" height="122.5" fill="#f0ffff" />
<rect x="945.5" y="435.5" width="508" height="2" fill="#6e6e6e" />
<rect x="945.5" y="435.5" width="2" height="122.5" fill="#6e6e6e" />
<rect x="945.5" y="557" width="508" height="1.5" fill="#ffffff" />
<rect x="1452.5" y="435.5" width="1.5" height="123" fill="#ffffff" />
<text x="963.3" y="475.0" font-size="17.5" font-family='"Liberation Sans", sans-serif' fill="#800020" font-weight="bold" text-anchor="middle">P</text>
<text x="963.3" y="494.7" font-size="17.5" font-family='"Liberation Sans", sans-serif' fill="#800020" font-weight="bold" text-anchor="middle">L</text>
<text x="963.3" y="514.7" font-size="17.5" font-family='"Liberation Sans", sans-serif' fill="#800020" font-weight="bold" text-anchor="middle">O</text>
<text x="963.3" y="533.9" font-size="17.5" font-family='"Liberation Sans", sans-serif' fill="#800020" font-weight="bold" text-anchor="middle">T</text>
<text x="988.0" y="469.2" font-size="18" font-family='"Liberation Sans", sans-serif' fill="#800020" font-weight="bold" textLength="46.5" lengthAdjust="spacingAndGlyphs" >Scale</text>
<rect x="1045.5" y="449" width="404" height="28" fill="#fff8d0" />
<rect x="1052.5" y="456.5" width="387.5" height="5.5" fill="#e6e6e6" stroke="#d6d6d6" stroke-width="1" rx="2.5" />
<line x1="1058.2" y1="471" x2="1058.2" y2="476.5" stroke="#9a9a9a" stroke-width="1" />
<line x1="1077.1" y1="472" x2="1077.1" y2="476.5" stroke="#9a9a9a" stroke-width="1" />
<line x1="1096.0" y1="472" x2="1096.0" y2="476.5" stroke="#9a9a9a" stroke-width="1" />
<line x1="1114.9" y1="472" x2="1114.9" y2="476.5" stroke="#9a9a9a" stroke-width="1" />
<line x1="1133.8" y1="472" x2="1133.8" y2="476.5" stroke="#9a9a9a" stroke-width="1" />
<line x1="1152.8" y1="472" x2="1152.8" y2="476.5" stroke="#9a9a9a" stroke-width="1" />
<line x1="1171.7" y1="472" x2="1171.7" y2="476.5" stroke="#9a9a9a" stroke-width="1" />
<line x1="1190.6" y1="472" x2="1190.6" y2="476.5" stroke="#9a9a9a" stroke-width="1" />
<line x1="1209.5" y1="472" x2="1209.5" y2="476.5" stroke="#9a9a9a" stroke-width="1" />
<line x1="1228.4" y1="472" x2="1228.4" y2="476.5" stroke="#9a9a9a" stroke-width="1" />
<line x1="1247.3" y1="472" x2="1247.3" y2="476.5" stroke="#9a9a9a" stroke-width="1" />
<line x1="1266.2" y1="472" x2="1266.2" y2="476.5" stroke="#9a9a9a" stroke-width="1" />
<line x1="1285.1" y1="472" x2="1285.1" y2="476.5" stroke="#9a9a9a" stroke-width="1" />
<line x1="1304.0" y1="472" x2="1304.0" y2="476.5" stroke="#9a9a9a" stroke-width="1" />
<line x1="1322.9" y1="472" x2="1322.9" y2="476.5" stroke="#9a9a9a" stroke-width="1" />
<line x1="1341.8" y1="472" x2="1341.8" y2="476.5" stroke="#9a9a9a" stroke-width="1" />
<line x1="1360.8" y1="472" x2="1360.8" y2="476.5" stroke="#9a9a9a" stroke-width="1" />
<line x1="1379.7" y1="472" x2="1379.7" y2="476.5" stroke="#9a9a9a" stroke-width="1" />
<line x1="1398.6" y1="472" x2="1398.6" y2="476.5" stroke="#9a9a9a" stroke-width="1" />
<line x1="1417.5" y1="472" x2="1417.5" y2="476.5" stroke="#9a9a9a" stroke-width="1" />
<line x1="1436.4" y1="471" x2="1436.4" y2="476.5" stroke="#9a9a9a" stroke-width="1" />
<path d="M1225.7,453.2 H1234.8 V463.5 L1230.25,468 L1225.7,463.5 Z" fill="#0078d4"/>
<text x="988.0" y="508.3" font-size="18" font-family='"Liberation Sans", sans-serif' fill="#800020" font-weight="bold" textLength="34.5" lengthAdjust="spacingAndGlyphs" >Size</text>
<rect x="1032.5" y="486.5" width="244" height="34" fill="#f0fff0" />
<rect x="1032.5" y="486.5" width="244" height="2" fill="#6e6e6e" />
<rect x="1032.5" y="486.5" width="2" height="34" fill="#6e6e6e" />
<rect x="1032.5" y="520" width="244" height="1" fill="#ffffff" />
<rect x="1276" y="486.5" width="1" height="34" fill="#ffffff" />
<circle cx="1056.8" cy="503.5" r="9.5" fill="#0067c0"/><circle cx="1056.8" cy="503.5" r="4" fill="#fff"/>
<text x="1075.5" y="509.1" font-size="17" font-family='"Liberation Sans", sans-serif' fill="#800020" font-weight="bold" textLength="54.0" lengthAdjust="spacingAndGlyphs" >normal</text>
<circle cx="1152.7" cy="503.5" r="9" fill="#f7f7f7" stroke="#4e4e4e" stroke-width="1"/>
<text x="1171.0" y="509.6" font-size="17" font-family='"Liberation Sans", sans-serif' fill="#800020" font-weight="bold" textLength="25.5" lengthAdjust="spacingAndGlyphs" >x 2</text>
<circle cx="1219" cy="503.5" r="9" fill="#f7f7f7" stroke="#4e4e4e" stroke-width="1"/>
<text x="1237.3" y="510.5" font-size="17" font-family='"Liberation Sans", sans-serif' fill="#800020" font-weight="bold" textLength="25.7" lengthAdjust="spacingAndGlyphs" >x 5</text>
<text x="1310.8" y="510.5" font-size="18.5" font-family='"Liberation Sans", sans-serif' fill="#800080" font-weight="bold" textLength="105.7" lengthAdjust="spacingAndGlyphs" >Form opacity</text>
<rect x="1278.5" y="521" width="172" height="31.5" fill="#fff8d0" />
<rect x="1287.5" y="530.5" width="151.5" height="5" fill="#e6e6e6" stroke="#d6d6d6" stroke-width="1" rx="2.5" />
<line x1="1293.7" y1="545.5" x2="1293.7" y2="552" stroke="#9a9a9a" stroke-width="1" />
<line x1="1322.3" y1="546.5" x2="1322.3" y2="552" stroke="#9a9a9a" stroke-width="1" />
<line x1="1350.6" y1="546.5" x2="1350.6" y2="552" stroke="#9a9a9a" stroke-width="1" />
<line x1="1378" y1="546.5" x2="1378" y2="552" stroke="#9a9a9a" stroke-width="1" />
<line x1="1406.6" y1="546.5" x2="1406.6" y2="552" stroke="#9a9a9a" stroke-width="1" />
<line x1="1434.8" y1="545.5" x2="1434.8" y2="552" stroke="#9a9a9a" stroke-width="1" />
<path d="M1428.1,523.8 H1440.2 V537.5 L1434.15,542.8 L1428.1,537.5 Z" fill="#0078d4"/>
<text x="989.5" y="547.4" font-size="18" font-family='"Liberation Sans", sans-serif' fill="#800020" font-weight="bold" textLength="153.5" lengthAdjust="spacingAndGlyphs" >Scroll range x1.25</text>
<rect x="1156.0" y="532.5" width="17.5" height="17.5" fill="#f7f7f7" stroke="#5a5a5a" stroke-width="1" rx="3.5" />
<text x="966.5" y="590.9" font-size="16.5" font-family='"Liberation Sans", sans-serif' fill="#000" textLength="144.0" lengthAdjust="spacingAndGlyphs" >RMS fit -0.8 ±0.0 km</text>
<rect x="954.5" y="605.5" width="490" height="340" fill="#ffffff" />
<rect x="954.5" y="605.5" width="490" height="2" fill="#a0a0a0" />
<rect x="954.5" y="605.5" width="2" height="340" fill="#6e6e6e" />
<rect x="954.5" y="944.5" width="490" height="1.5" fill="#ffffff" />
<rect x="1443.5" y="605.5" width="1.5" height="340" fill="#ffffff" />
<rect x="956.5" y="920" width="487" height="24.5" fill="#f0f0f0" />
<rect x="982.3" y="930" width="308" height="3.5" fill="#858585" rx="1.5" />
<rect x="964.5" y="616" width="99" height="3.5" fill="#4b0082" />
<circle cx="968.2" cy="637" r="2" fill="#3a3a3a"/>
<circle cx="990.5" cy="637" r="2" fill="#3a3a3a"/>
<circle cx="1013.4" cy="637" r="2" fill="#3a3a3a"/>
<circle cx="1035.8" cy="637" r="2" fill="#3a3a3a"/>
<circle cx="1058.5" cy="637" r="2" fill="#3a3a3a"/>
<text x="1097.0" y="625.4" font-size="18" font-family='"Liberation Mono", monospace' fill="#000" textLength="12.3" lengthAdjust="spacingAndGlyphs" >1</text>
<text x="1097.0" y="643.6" font-size="18" font-family='"Liberation Mono", monospace' fill="#000" textLength="49.4" lengthAdjust="spacingAndGlyphs" >2(P)</text>
<text x="1159.7" y="625.4" font-size="18" font-family='"Liberation Mono", monospace' fill="#000" textLength="284.1" lengthAdjust="spacingAndGlyphs" >Takeshi Nemoto, near Ka</text>
<text x="1159.7" y="643.6" font-size="18" font-family='"Liberation Mono", monospace' fill="#000" textLength="111.1" lengthAdjust="spacingAndGlyphs" >Predicted</text>
</svg></body></html>
